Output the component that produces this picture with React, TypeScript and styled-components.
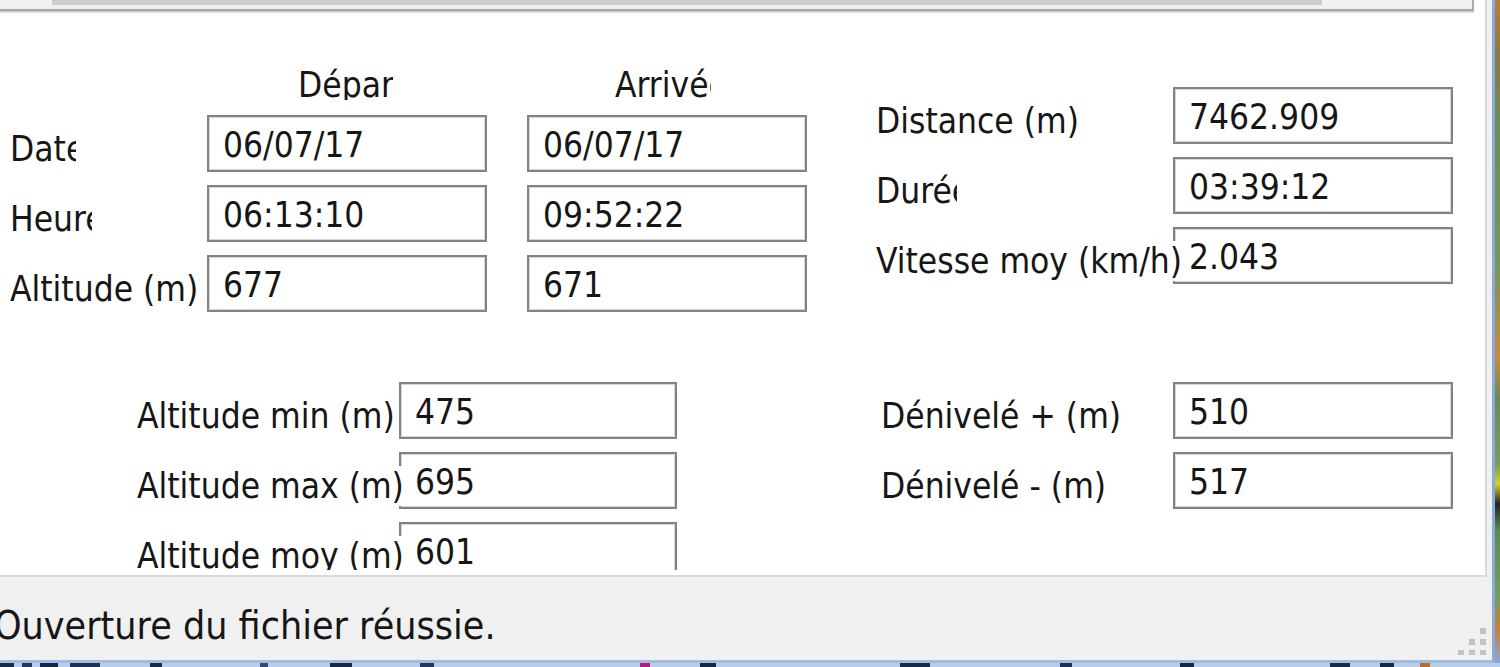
import React from "react";
import styled, { createGlobalStyle } from "styled-components";

const FONT = `"DejaVu Sans Condensed", "DejaVu Sans", "Liberation Sans", sans-serif`;

const Global = createGlobalStyle`
  html, body { margin: 0; padding: 0; width: 1500px; height: 667px; overflow: hidden; background: #fff; }
  #root { width: 1500px; height: 667px; }
  * { box-sizing: border-box; }
`;

const Screen = styled.div`
  width: 1500px;
  height: 667px;
  overflow: hidden;
  display: flex;
  flex-direction: column;
  font-family: ${FONT};
  background: #b9cde6;
`;

const TopRow = styled.div`
  display: flex;
  height: 663px;
`;

const Window = styled.div`
  width: 1495px;
  height: 663px;
  background: #f0f0f0;
  border-right: 3px solid #86aadc;
  border-bottom: 3px solid #9dbde6;
  display: flex;
  flex-direction: column;
`;

const DesktopRight = styled.div`
  flex: 1;
  background: linear-gradient(
    to bottom,
    #b97b3c 0%,
    #8c7a40 8%,
    #6f8a52 18%,
    #7a9458 40%,
    #c88a40 54%,
    #6b8a55 60%,
    #7c9a5c 70%,
    #d6cf22 73%,
    #222 76%,
    #5d8a50 80%,
    #7a9a5c 90%,
    #c8803a 95%,
    #86aadc 100%
  );
`;

const DesktopBottom = styled.svg`
  display: block;
  width: 1500px;
  height: 4px;
`;

const Panel = styled.div`
  width: 1487px;
  height: 577px;
  background: #fff;
  border-right: 2px solid #d9d9d9;
  border-bottom: 2px solid #d9d9d9;
  display: flex;
  flex-direction: column;
`;

const ScrollBar = styled.div`
  width: 1474px;
  height: 11px;
  flex: none;
  background: #f0f0f0;
  border-right: 2px solid #a9a9b1;
  border-bottom: 2px solid #a6a6ae;
  box-shadow: 0 1px 0 #c9c9d0, 0 2px 1px #e2e2e6;
  padding-left: 52px;
`;

const Thumb = styled.div`
  width: 1270px;
  height: 5px;
  background: #cdcdcd;
`;

const Content = styled.div`
  height: 559px;
  flex: none;
  overflow: hidden;
  padding: 54px 0 0 10px;
  display: flex;
  flex-direction: column;
`;

const Section = styled.div<{ $mt?: number }>`
  display: flex;
  align-items: flex-start;
  margin-top: ${(p) => p.$mt ?? 0}px;
`;

const Group = styled.div<{ $ml?: number; $mt?: number }>`
  display: flex;
  flex-direction: column;
  gap: 13px;
  margin-left: ${(p) => p.$ml ?? 0}px;
  margin-top: ${(p) => p.$mt ?? 0}px;
`;

const HeaderRow = styled.div`
  display: flex;
  height: 37px;
`;

const HeaderCell = styled.div<{ $ml: number; $w: number }>`
  margin-left: ${(p) => p.$ml}px;
  width: ${(p) => p.$w}px;
  height: 35px;
  overflow: hidden;
  white-space: nowrap;
  font-size: 35px;
  line-height: 40px;
  color: #161616;
`;

const Row = styled.div`
  display: flex;
  height: 57px;
`;

const LabelCell = styled.div<{ $w: number; $over?: number }>`
  position: relative;
  z-index: 1;
  width: ${(p) => p.$w}px;
  margin-right: ${(p) => -(p.$over ?? 0)}px;
  margin-top: 14px;
  height: 40px;
  background: #fff;
  font-size: 35px;
  line-height: 40px;
  color: #161616;
  white-space: nowrap;
`;

const LabelText = styled.div<{ $clip?: number }>`
  max-width: ${(p) => (p.$clip ? `${p.$clip}px` : "none")};
  overflow: hidden;
  white-space: nowrap;
`;

const Field = styled.div<{ $w?: number; $ml?: number }>`
  width: ${(p) => p.$w ?? 280}px;
  height: 57px;
  margin-left: ${(p) => p.$ml ?? 0}px;
  border: 2px solid #838383;
  box-shadow: inset 0 0 0 1px #d6d6d6;
  background: #fff;
  padding: 8px 0 0 14px;
  font-size: 35px;
  line-height: 40px;
  color: #161616;
  white-space: nowrap;
  overflow: hidden;
`;

const StatusBar = styled.div`
  flex: 1;
  display: flex;
  align-items: flex-start;
  justify-content: space-between;
  padding: 27px 4px 0 0;
`;

const StatusText = styled.div`
  margin-left: -6px;
  font-size: 39px;
  line-height: 44px;
  color: #161616;
  white-space: nowrap;
`;

const Grip = styled.svg`
  width: 30px;
  height: 30px;
  margin-top: 21px;
  flex: none;
`;

type L = { text: string; clip?: number; over?: number };

function LabeledRow({
  label,
  w,
  value,
  fw,
}: {
  label: L;
  w: number;
  value: string;
  fw?: number;
}) {
  const over = label.over ?? 0;
  return (
    <Row>
      <LabelCell $w={w + over} $over={over}>
        <LabelText $clip={label.clip}>{label.text}</LabelText>
      </LabelCell>
      <Field $w={fw}>{value}</Field>
    </Row>
  );
}

export default function App() {
  const topLeft: { label: L; dep: string; arr: string }[] = [
    { label: { text: "Date", clip: 66 }, dep: "06/07/17", arr: "06/07/17" },
    { label: { text: "Heure", clip: 82 }, dep: "06:13:10", arr: "09:52:22" },
    { label: { text: "Altitude (m)" }, dep: "677", arr: "671" },
  ];
  const topRight: { label: L; v: string }[] = [
    { label: { text: "Distance (m)" }, v: "7462.909" },
    { label: { text: "Durée", clip: 81 }, v: "03:39:12" },
    { label: { text: "Vitesse moy (km/h)", clip: 307, over: 10 }, v: "2.043" },
  ];
  const lowLeft: { label: L; v: string }[] = [
    { label: { text: "Altitude min (m)" }, v: "475" },
    { label: { text: "Altitude max (m)", over: 5 }, v: "695" },
    { label: { text: "Altitude moy (m)", over: 6 }, v: "601" },
  ];
  const lowRight: { label: L; v: string }[] = [
    { label: { text: "Dénivelé + (m)" }, v: "510" },
    { label: { text: "Dénivelé - (m)" }, v: "517" },
  ];

  const dots: [number, number][] = [
    [22, 3],
    [11, 14],
    [22, 14],
    [0, 25],
    [11, 25],
    [22, 25],
  ];

  const blobs: [number, number, string][] = [
    [0, 14, "#1d2a44"],
    [22, 10, "#2a3656"],
    [40, 18, "#18243c"],
    [70, 30, "#233150"],
    [150, 12, "#1d2a44"],
    [260, 8, "#3a4668"],
    [330, 22, "#1b2740"],
    [420, 14, "#2a3656"],
    [640, 10, "#c01880"],
    [700, 16, "#1b2740"],
    [900, 30, "#1d2a44"],
    [1060, 12, "#223050"],
    [1180, 14, "#1b2740"],
    [1330, 20, "#1d2a44"],
    [1380, 14, "#1b2740"],
    [1420, 10, "#c06a20"],
  ];

  return (
    <>
      <Global />
      <Screen>
        <TopRow>
          <Window>
            <Panel>
              <ScrollBar>
                <Thumb />
              </ScrollBar>
              <Content>
                <Section>
                  <Group>
                    <HeaderRow>
                      <HeaderCell $ml={288} $w={95}>
                        Départ
                      </HeaderCell>
                      <HeaderCell $ml={222} $w={96}>
                        Arrivée
                      </HeaderCell>
                    </HeaderRow>
                    {topLeft.map((r) => (
                      <Row key={r.label.text}>
                        <LabelCell $w={197}>
                          <LabelText $clip={r.label.clip}>{r.label.text}</LabelText>
                        </LabelCell>
                        <Field>{r.dep}</Field>
                        <Field $ml={40}>{r.arr}</Field>
                      </Row>
                    ))}
                  </Group>
                  <Group $ml={69} $mt={22}>
                    {topRight.map((r) => (
                      <LabeledRow key={r.label.text} label={r.label} w={297} value={r.v} />
                    ))}
                  </Group>
                </Section>
                <Section $mt={70}>
                  <Group $ml={127}>
                    {lowLeft.map((r) => (
                      <LabeledRow key={r.label.text} label={r.label} w={262} value={r.v} fw={278} />
                    ))}
                  </Group>
                  <Group $ml={204}>
                    {lowRight.map((r) => (
                      <LabeledRow key={r.label.text} label={r.label} w={292} value={r.v} fw={280} />
                    ))}
                  </Group>
                </Section>
              </Content>
            </Panel>
            <StatusBar>
              <StatusText>Ouverture du fichier réussie.</StatusText>
              <Grip viewBox="0 0 30 30">
                {dots.map(([x, y], i) => (
                  <rect key={i} x={x} y={y} width={6} height={6} fill="#c3c3c3" />
                ))}
              </Grip>
            </StatusBar>
          </Window>
          <DesktopRight />
        </TopRow>
        <DesktopBottom viewBox="0 0 1500 4" preserveAspectRatio="none">
          {blobs.map(([x, w, c], i) => (
            <rect key={i} x={x} y={0} width={w} height={4} fill={c} />
          ))}
        </DesktopBottom>
      </Screen>
    </>
  );
}
